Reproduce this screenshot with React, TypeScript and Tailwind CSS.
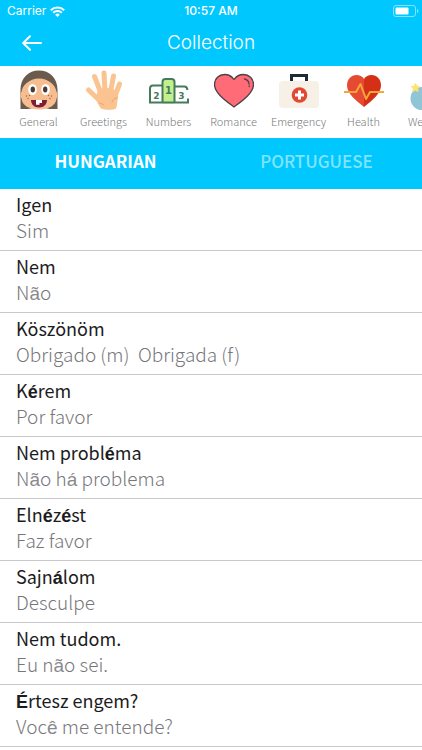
import { useState } from 'react'
import type { ReactNode } from 'react'

const categories = [
  { name: 'General', icon: <FaceIcon /> },
  { name: 'Greetings', icon: <HandIcon /> },
  { name: 'Numbers', icon: <PodiumIcon /> },
  { name: 'Romance', icon: <HeartIcon /> },
  { name: 'Emergency', icon: <KitIcon /> },
  { name: 'Health', icon: <HealthIcon /> },
  { name: 'Weather', icon: <WeatherIcon /> },
]

const phrases = [
  { id: 1, source: 'Igen', target: 'Sim' },
  { id: 2, source: 'Nem', target: 'Não' },
  { id: 3, source: 'Köszönöm', target: 'Obrigado (m)  Obrigada (f)' },
  { id: 4, source: 'Kérem', target: 'Por favor' },
  { id: 5, source: 'Nem probléma', target: 'Não há problema' },
  { id: 6, source: 'Elnézést', target: 'Faz favor' },
  { id: 7, source: 'Sajnálom', target: 'Desculpe' },
  { id: 8, source: 'Nem tudom.', target: 'Eu não sei.' },
  { id: 9, source: 'Értesz engem?', target: 'Você me entende?' },
]

export default function App() {
  const [tab, setTab] = useState('HUNGARIAN')

  return (
    <div className="min-h-screen overflow-hidden bg-white font-['Noto_Sans_CJK_KR',sans-serif]">
      <header className="bg-[#00c8ff] font-[Inter,sans-serif] text-white">
        <StatusBar />
        <div className="grid h-11 grid-cols-[64px_1fr_64px] items-center pb-0.5">
          <button type="button" aria-label="Back" className="flex justify-center">
            <svg width="20" height="16" viewBox="0 0 20 16" fill="none" stroke="currentColor" strokeWidth="2" strokeLinecap="round" strokeLinejoin="round">
              <path d="M19 8H1.5M8 1.2 1.2 8 8 14.8" />
            </svg>
          </button>
          <h1 className="text-center text-[19px] font-light">Collection</h1>
        </div>
      </header>

      {/* Categories */}
      <nav className="flex overflow-hidden px-1.5 pt-1 pb-[9px]">
        {categories.map((category) => (
          <button key={category.name} type="button" className="flex w-[65px] shrink-0 flex-col items-center gap-[3px]">
            {category.icon}
            <span className="text-[11px] leading-4 font-light text-[#77777b]">{category.name}</span>
          </button>
        ))}
      </nav>

      {/* Language tabs */}
      <div role="tablist" className="grid h-[51px] grid-cols-2 bg-[#00c8ff] pb-1.5 text-[17px]">
        {['HUNGARIAN', 'PORTUGUESE'].map((name) => (
          <button
            key={name}
            type="button"
            role="tab"
            aria-selected={tab === name}
            onClick={() => setTab(name)}
            className={tab === name ? 'font-bold text-white' : 'font-medium text-[#80e4ff]'}
          >
            {name}
          </button>
        ))}
      </div>

      {/* Phrases */}
      <ul>
        {phrases.map((phrase) => (
          <li key={phrase.id} className="border-b border-[#c8c8cc] px-4 pt-0.5 pb-[7px] leading-[26px]">
            <p className="text-[18px] text-[#1c1c1e]">
              <Accented text={phrase.source} className="font-bold" />
            </p>
            <p className="text-[19px] font-light whitespace-pre text-[#77777b]">
              <Accented text={phrase.target} className="font-normal text-[#8a8a8e]" />
            </p>
          </li>
        ))}
      </ul>
    </div>
  )
}

// Accented vowels are set apart from the rest of the word
function Accented({ text, className }: { text: string; className: string }) {
  return (
    <>
      {text.split(/([áéÉãê])/).map((part, index) =>
        index % 2 === 1 ? (
          <span key={index} className={`font-['Liberation_Sans',sans-serif] leading-4 ${className}`}>
            {part}
          </span>
        ) : (
          part
        )
      )}
    </>
  )
}

function StatusBar() {
  return (
    <div className="grid h-[22px] grid-cols-3 items-center px-[7px] text-[12px]">
      <div className="flex items-center gap-1">
        <span>Carrier</span>
        <svg width="15" height="11" viewBox="0 0 15 11" fill="none" stroke="currentColor" strokeWidth="2">
          <path d="M.8 4.2a9.6 9.6 0 0 1 13.4 0M3.2 6.8a6.2 6.2 0 0 1 8.6 0" />
          <path d="M7.5 11 5.2 8.7a3.3 3.3 0 0 1 4.6 0z" fill="currentColor" stroke="none" />
        </svg>
      </div>
      <span className="text-center font-medium">10:57 AM</span>
      <svg className="-mr-1 justify-self-end" width="26" height="12" viewBox="0 0 26 12" fill="none">
        <rect x=".5" y=".5" width="22" height="11" rx="2.5" stroke="#80e4ff" />
        <rect x="2.5" y="2.5" width="13" height="7" rx="1" fill="#fff" />
        <path d="M24 4v4c1-.4 1.4-1.2 1.4-2S25 4.400 24 4z" fill="#80e4ff" />
      </svg>
    </div>
  )
}

function Icon({ children }: { children: ReactNode }) {
  return (
    <svg width="40" height="40" viewBox="0 0 40 40" fill="none" aria-hidden="true">
      {children}
    </svg>
  )
}

function FaceIcon() {
  return (
    <Icon>
      <path d="M1.500 39V19.500C1.500 8 9.500.5 20 .5S38.500 8 38.500 19.500V39H31L20 37 9 39z" fill="#6b5b4d" />
      <path d="M2.500 22C3 16 10 8.500 20 8.500S37 16 37.500 22c1 .5 1.500 4.500 0 6.500-.5 7-8 11-17.500 11S3 35.500 2.500 28.500c-1.500-2-1-6 0-6.500z" fill="#f6bd91" />
      <ellipse cx="13.500" cy="19.500" rx="4.300" ry="5.500" fill="#fff" />
      <ellipse cx="26.500" cy="19.500" rx="4.300" ry="5.500" fill="#fff" />
      <ellipse cx="13.800" cy="19.500" rx="2.200" ry="3" fill="#493b35" />
      <ellipse cx="26.200" cy="19.500" rx="2.200" ry="3" fill="#493b35" />
      <g fill="#a85e3e">
        <circle cx="7.500" cy="26" r=".7" />
        <circle cx="10.500" cy="25.500" r=".7" />
        <circle cx="9" cy="28.500" r=".7" />
        <circle cx="29.500" cy="25.500" r=".7" />
        <circle cx="32.500" cy="26" r=".7" />
        <circle cx="31" cy="28.500" r=".7" />
      </g>
      <path d="M12 30h16c0 4-3 7.500-8 7.500s-8-3.500-8-7.500z" fill="#7d1d38" />
      <path d="M17 30h6v3h-2.500v1.800H17z" fill="#fff" />
    </Icon>
  )
}

function HandIcon() {
  return (
    <Icon>
      <g stroke="#fbc38f" strokeWidth="5" strokeLinecap="round">
        <path d="M4.500 20 14 29M10.500 6.500 16.500 22M20 3 21 22M29.500 6 26.500 22M35.500 14 31 26" />
      </g>
      <path d="M14 20c5-2.500 12-3 19 1.500 1 3.500 1.500 6 .5 9-.5 3-.5 6-1.500 8-2 1.800-12 1.800-15 0-2-2-3.500-6-5.500-9.500z" fill="#fbc38f" />
      <path d="M33 27.500c-3 1-4.500 2.500-5 5M15 33c2 .3 3.500 1 5 2.500" stroke="#efa06d" />
    </Icon>
  )
}

function PodiumIcon() {
  return (
    <Icon>
      <path d="M13.500 33.500V14.500H4.500Q0.500 14.500.5 18.500V33.500z" fill="#fff" />
      <path d="M13.500 33.500V12Q13.500 9 16.500 9h6Q25.500 9 25.500 12v21.500z" fill="#c3f08d" />
      <g stroke="#457b5c" strokeWidth="2">
        <path d="M13.500 15.500H4Q1 15.500 1 18.500v14h38v-4M13.500 32.500V12Q13.500 9 16.500 9h6Q25.500 9 25.500 12v20.500M25.500 16.500h10Q38 16.500 38.500 20" />
      </g>
      <g fill="#457b5c" fontFamily="DejaVu Sans" fontWeight="bold" textAnchor="middle">
        <text x="7.500" y="28.500" fontSize="9">2</text>
        <text x="19.500" y="23.500" fontSize="10">1</text>
        <text x="32.500" y="28.500" fontSize="9">3</text>
      </g>
    </Icon>
  )
}

function HeartIcon() {
  return (
    <Icon>
      <path d="M20 37C12 31 0.500 23 .5 14.500.5 8.500 5 4.500 10.500 4.500c4 0 7.500 2 9.500 5 2-3 5.500-5 9.500-5 5.500 0 10 4 10 10C39.500 23 28 31 20 37z" fill="#ff6b76" stroke="#4d4147" strokeWidth="1.300" strokeLinejoin="round" />
      <path d="M30.500 9c2.500.5 4.200 2.300 4.600 5M35.200 16v.5" stroke="#4d4147" strokeWidth="1.300" strokeLinecap="round" />
    </Icon>
  )
}

function KitIcon() {
  return (
    <Icon>
      <path d="M12.500 12V5.500h15V12" stroke="#202936" strokeWidth="3" />
      <rect x="0" y="11" width="40" height="27" rx="4" fill="#f6f0e6" />
      <circle cx="20.500" cy="25" r="7.800" fill="#e04a32" />
      <path d="M20.500 20.500v9M16 25h9" stroke="#fff" strokeWidth="3" />
    </Icon>
  )
}

function HealthIcon() {
  return (
    <Icon>
      <path d="M20 37C11 30 3 23 3 15.500 3 9.500 7 5 12.500 5c3 0 6 1.500 7.500 4z" fill="#e64a32" />
      <path d="M20 37c9-7 17-14 17-21.500C37 9.500 33 5 27.500 5c-3 0-6 1.500-7.500 4z" fill="#d33017" />
      <path d="M0 22h12l4.500-8 5.500 15 4-7h14" stroke="#f6a638" strokeWidth="2" strokeLinejoin="round" />
    </Icon>
  )
}

function WeatherIcon() {
  return (
    <Icon>
      <path d="M13 17A11.500 11.500 0 0 0 13 40H32A8 8 0 0 0 34 24 12 12 0 0 0 13 17z" fill="#8fc5d4" />
      <path d="m6.500 13.500 1.300 2.700 3 .4-2.200 2 .5 3-2.600-1.400-2.700 1.400.5-3-2.100-2 2.900-.4z" fill="#ffe274" stroke="#ffe274" />
    </Icon>
  )
}
